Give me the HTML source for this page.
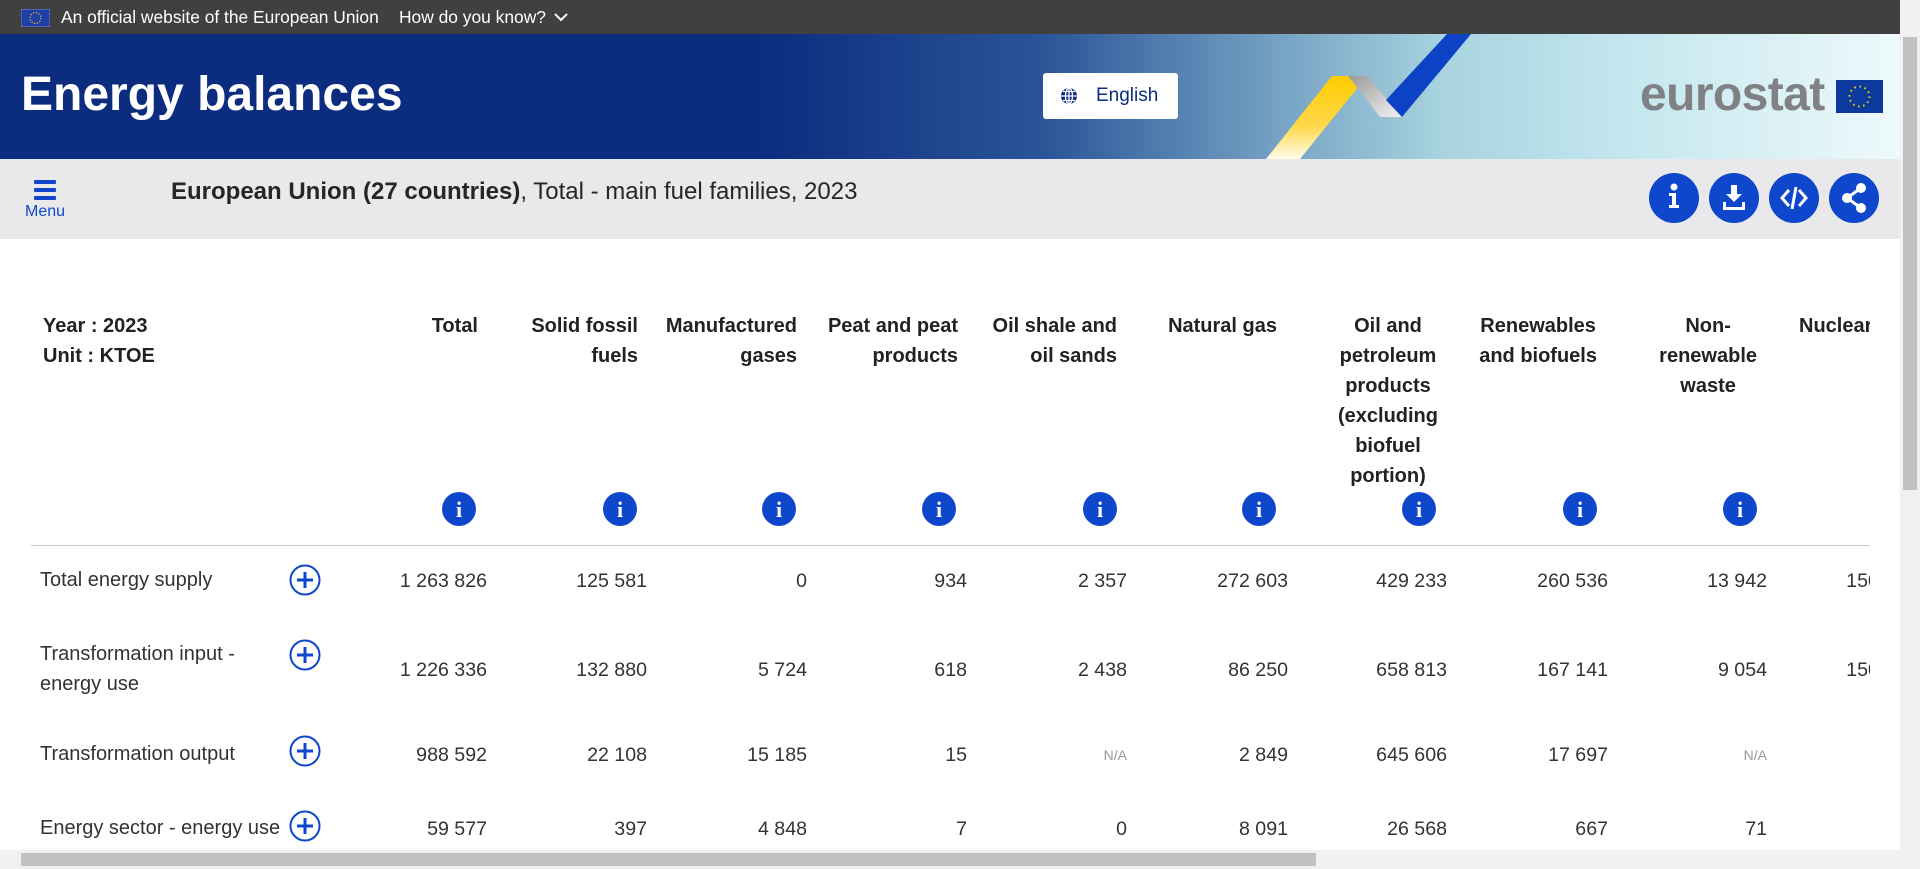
<!DOCTYPE html>
<html><head><meta charset="utf-8"><style>
*{margin:0;padding:0;box-sizing:border-box}
body{width:1920px;height:869px;overflow:hidden;position:relative;font-family:"Liberation Sans",Arial,sans-serif;background:#fff;color:#333}
.a{position:absolute;white-space:nowrap}
#top{left:0;top:0;width:1900px;height:34px;background:#404040;color:#fff;font-size:17.4px}
#banner{left:0;top:34px;width:1900px;height:125px;background:linear-gradient(90deg,#0c2c7f 0%,#0c2c7f 40%,#2a5598 55%,#7aa6c6 68%,#a8d3df 76%,#c2e6ee 85%,#eef9fb 100%)}
#gray{left:0;top:159px;width:1900px;height:80px;background:#e9e9eb}
.hd{font-weight:bold;font-size:20px;color:#222;line-height:30px;text-align:right}
.v{font-size:19.6px;color:#333;text-align:right;width:150px}
.lb{font-size:20px;color:#333;line-height:30px}
.na{font-size:14px;color:#999;text-align:right;width:150px}
</style></head><body>
<div class="a" id="top">
 <svg class="a" style="left:21px;top:9px" width="29" height="18" viewBox="0 0 29 18"><rect width="29" height="18" fill="#1f3fa8" stroke="#7a8cc0"/><circle cx="14.5" cy="9" r="5.5" fill="none" stroke="#f5d000" stroke-width="1.2" stroke-dasharray="1.2 1.7"/></svg>
 <span class="a" style="left:61px;top:7px">An official website of the European Union</span>
 <span class="a" style="left:399px;top:7px">How do you know?</span>
 <svg class="a" style="left:554px;top:12px" width="14" height="10"><path d="M1 2 L7 8 L13 2" stroke="#fff" stroke-width="2" fill="none"/></svg>
</div>
<div class="a" id="banner">
 <div class="a" style="left:21px;top:33px;font-size:48px;font-weight:bold;color:#fff">Energy balances</div>
 <div class="a" style="left:1043px;top:39px;width:135px;height:46px;background:#fff;border-radius:3px">
  <svg class="a" style="left:17px;top:14px" width="18" height="18" viewBox="0 0 18 18"><circle cx="9" cy="9" r="8" fill="#0c2c7f"/><path d="M1 9H17M9 1V17M3 4.5H15M3 13.5H15" stroke="#fff" stroke-width="1.3"/><ellipse cx="9" cy="9" rx="3.5" ry="8" fill="none" stroke="#fff" stroke-width="1.3"/></svg>
  <span class="a" style="left:53px;top:12px;font-size:19px;color:#0c2c7f">English</span>
 </div>
 <svg class="a" style="left:0;top:0" width="1900" height="125">
  <defs><linearGradient id="y" x1="0" y1="0" x2="0" y2="1"><stop offset="0" stop-color="#ffcc00"/><stop offset="0.6" stop-color="#ffd84a"/><stop offset="1" stop-color="#fffbe8"/></linearGradient>
  <linearGradient id="g" x1="0" y1="0" x2="1" y2="1"><stop offset="0" stop-color="#9a9a9a"/><stop offset="1" stop-color="#f2f2f2"/></linearGradient></defs>
  <polygon points="1332,42 1367,42 1300,125 1266,125" fill="url(#y)"/>
  <polygon points="1348,42 1367,42 1402,83 1380,83" fill="url(#g)"/>
  <polygon points="1447,0 1471,0 1402,83 1386,66" fill="#0d42c4"/>
 </svg>
 <div class="a" style="left:1640px;top:33px;font-size:48px;font-weight:bold;color:#7f8184;letter-spacing:-0.6px">eurostat</div>
 <svg class="a" style="left:1836px;top:46px" width="47" height="33" viewBox="0 0 47 33"><rect width="47" height="33" fill="#0c3a9c"/><circle cx="23.5" cy="16.5" r="10" fill="none" stroke="#ffd200" stroke-width="2" stroke-dasharray="1.5 3.7"/></svg>
</div>
<div class="a" id="gray">
 <div class="a" style="left:34px;top:21px;width:22px;height:4px;background:#0e47cb;border-radius:1px"></div>
 <div class="a" style="left:34px;top:29px;width:22px;height:4px;background:#0e47cb;border-radius:1px"></div>
 <div class="a" style="left:34px;top:37px;width:22px;height:4px;background:#0e47cb;border-radius:1px"></div>
 <div class="a" style="left:25px;top:44px;font-size:16px;color:#0e47cb">Menu</div>
 <div class="a" style="left:171px;top:19px;font-size:24px;color:#262626"><b>European Union (27 countries)</b>, Total - main fuel families, 2023</div>
 <svg class="a" style="left:1649px;top:14px" width="235" height="52" viewBox="0 0 235 52">
  <g fill="#0e47cb"><circle cx="25" cy="25" r="25"/><circle cx="85" cy="25" r="25"/><circle cx="145" cy="25" r="25"/><circle cx="205" cy="25" r="25"/></g>
  <g fill="#fff"><circle cx="25" cy="14" r="3.5"/><path d="M20 20h7v12h3v3h-10v-3h3v-9h-3z"/>
  <path d="M82 12h6v9h5l-8 8-8-8h5z"/><path d="M74 29v8h22v-8h-3v5h-16v-5z"/></g>
  <g stroke="#fff" stroke-width="3" fill="none"><path d="M140 17l-7 8 7 8M150 17l7 8-7 8M147 14l-4 22"/>
  <path d="M212 15L198 25L212 35"/></g>
  <g fill="#fff"><circle cx="212" cy="15" r="5"/><circle cx="198" cy="25" r="5"/><circle cx="212" cy="35" r="5"/></g>
 </svg>
</div>

<div class="a" style="left:0;top:239px;width:1870px;height:611px;overflow:hidden">
 <div class="a hd" style="left:43px;top:72px;text-align:left">Year : 2023<br>Unit : KTOE</div>
 <div class="a hd" style="right:1392px;top:72px">Total</div>
 <div class="a hd" style="right:1232px;top:72px">Solid fossil<br>fuels</div>
 <div class="a hd" style="right:1073px;top:72px">Manufactured<br>gases</div>
 <div class="a hd" style="right:912px;top:72px">Peat and peat<br>products</div>
 <div class="a hd" style="right:753px;top:72px">Oil shale and<br>oil sands</div>
 <div class="a hd" style="right:593px;top:72px">Natural gas</div>
 <div class="a hd" style="right:432px;top:72px;text-align:center">Oil and<br>petroleum<br>products<br>(excluding<br>biofuel<br>portion)</div>
 <div class="a hd" style="right:273px;top:72px;text-align:center">Renewables<br>and biofuels</div>
 <div class="a hd" style="right:113px;top:72px;text-align:center">Non-<br>renewable<br>waste</div>
 <div class="a hd" style="left:1799px;top:72px;text-align:left">Nuclear heat</div>
 <svg class="a" style="left:0;top:0" width="1870" height="611">
  <g fill="#0e47cb">
   <circle cx="459" cy="270" r="17"/><circle cx="620" cy="270" r="17"/><circle cx="779" cy="270" r="17"/><circle cx="939" cy="270" r="17"/><circle cx="1100" cy="270" r="17"/><circle cx="1259" cy="270" r="17"/><circle cx="1419" cy="270" r="17"/><circle cx="1580" cy="270" r="17"/><circle cx="1740" cy="270" r="17"/>
  </g>
  <g fill="#fff" font-family="Liberation Serif,serif" font-weight="bold" font-size="22" text-anchor="middle">
   <text x="459" y="278">i</text><text x="620" y="278">i</text><text x="779" y="278">i</text><text x="939" y="278">i</text><text x="1100" y="278">i</text><text x="1259" y="278">i</text><text x="1419" y="278">i</text><text x="1580" y="278">i</text><text x="1740" y="278">i</text>
  </g>
  <line x1="31" y1="306.5" x2="1870" y2="306.5" stroke="#c8c8c8"/>
  <g fill="none" stroke="#0e47cb" stroke-width="2">
   <circle cx="305" cy="341" r="14.5"/><circle cx="305" cy="416" r="14.5"/><circle cx="305" cy="512" r="14.5"/><circle cx="305" cy="587" r="14.5"/>
  </g>
  <g stroke="#0e47cb" stroke-width="3">
   <path d="M297 341h16M305 333v16"/><path d="M297 416h16M305 408v16"/><path d="M297 512h16M305 504v16"/><path d="M297 587h16M305 579v16"/>
  </g>
 </svg>
 <div class="a lb" style="left:40px;top:326px">Total energy supply</div>
 <div class="a lb" style="left:40px;top:400px">Transformation input -<br>energy use</div>
 <div class="a lb" style="left:40px;top:500px">Transformation output</div>
 <div class="a lb" style="left:40px;top:574px">Energy sector - energy use</div>
 <div id="rows"></div>
</div>
<script>
var R=[487,647,807,967,1127,1288,1447,1608,1767,1917];
var D=[[331,["1 263 826","125 581","0","934","2 357","272 603","429 233","260 536","13 942","150 781"]],
[420,["1 226 336","132 880","5 724","618","2 438","86 250","658 813","167 141","9 054","150 781"]],
[505,["988 592","22 108","15 185","15","N/A","2 849","645 606","17 697","N/A",""]],
[579,["59 577","397","4 848","7","0","8 091","26 568","667","71",""]]];
var h="";D.forEach(function(r){r[1].forEach(function(v,i){if(v=="N/A")h+='<div class="a na" style="left:'+(R[i]-150)+'px;top:'+(r[0]+3)+'px">N/A</div>';else h+='<div class="a v" style="left:'+(R[i]-150)+'px;top:'+r[0]+'px">'+v+'</div>';});});
document.getElementById("rows").innerHTML=h;
</script>
<div class="a" style="left:1900px;top:0;width:20px;height:869px;background:#f1f1f1"></div>
<div class="a" style="left:1903px;top:37px;width:14px;height:453px;background:#c1c1c1"></div>
<div class="a" style="left:0;top:850px;width:1900px;height:19px;background:#f1f1f1"></div>
<div class="a" style="left:21px;top:853px;width:1295px;height:13px;background:#c1c1c1"></div>
</body></html>
